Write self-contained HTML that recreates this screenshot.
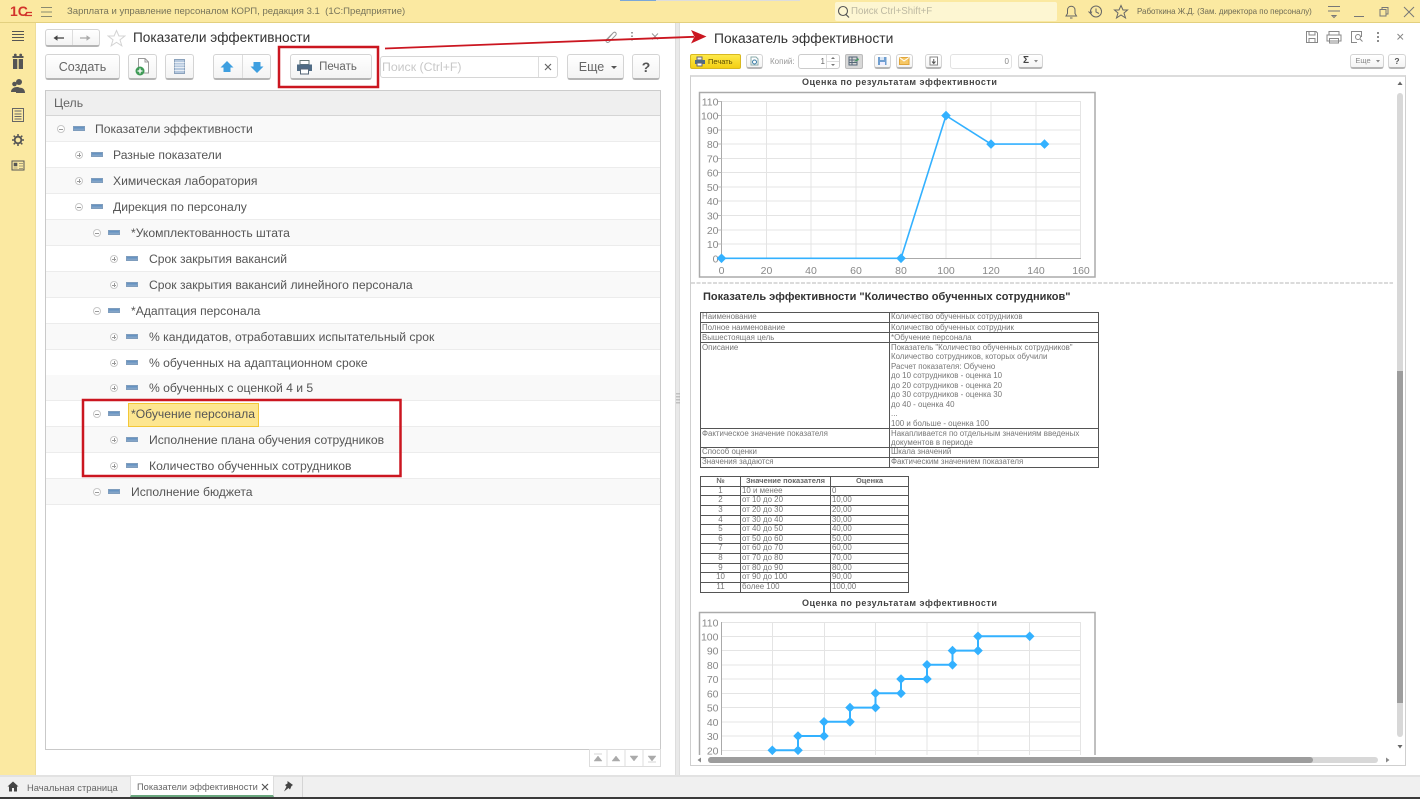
<!DOCTYPE html>
<html lang="ru"><head><meta charset="utf-8"><title>Показатели эффективности</title>
<style>
*{box-sizing:border-box}
html,body{margin:0;padding:0;width:1420px;height:799px;overflow:hidden;background:#fff;font-family:"Liberation Sans",sans-serif;color:#444}
body{filter:blur(.3px)}
.a{position:absolute;white-space:nowrap}
.top{left:0;top:0;width:1420px;height:23px;background:#fbe9a1;border-bottom:1px solid #e3d07f}
.side{left:0;top:23px;width:36px;height:752px;background:#fbe9a1;border-right:1px solid #eedd9a}
.btn{position:absolute;border:1px solid #d4d4d4;border-bottom:2px solid #b5b5b5;border-radius:3px;background:linear-gradient(#fff,#f3f3f3);text-align:center;color:#666;font-size:13px}
.row{position:absolute;left:46px;width:614px;height:26px;border-bottom:1px solid #ececec}
.row.g{background:#f9f9f9}
.t{position:absolute;font-size:12.15px;color:#555;white-space:nowrap;line-height:16px}
.minus{position:absolute;width:12px;height:5px;background:linear-gradient(#5f8fc0,#8aa9c9);border:1px solid #7f9dbd}
.exp{position:absolute;width:8px;height:8px;border:1px solid #c8c8c8;border-radius:50%;background:#fff}
.exp:before{content:"";position:absolute;left:1px;right:1px;top:2.5px;height:1px;background:#999}
.exp.p:after{content:"";position:absolute;top:1px;bottom:1px;left:2.5px;width:1px;background:#999}
table{position:absolute;border-collapse:collapse;font-size:7.9px;color:#777;table-layout:fixed;line-height:8.63px}
td,th{border:1px solid #555;padding:0 1px;vertical-align:top;white-space:nowrap;overflow:hidden;font-weight:normal}
th{font-weight:bold;text-align:center;color:#666;font-size:7.5px}
.c{text-align:center}
</style></head><body>

<div class="a top"></div>
<div class="a" style="left:620px;top:0;width:36px;height:1px;background:#7aa7d8"></div>
<div class="a" style="left:656px;top:0;width:144px;height:1px;background:#ddd"></div>
<div class="a side"></div>

<svg class="a" style="left:9px;top:4px" width="26" height="14" viewBox="0 0 26 14"><text x="1" y="12" font-family="Liberation Sans" font-weight="bold" font-size="14" fill="#d2332b">1С</text><path d="M16 11.500H23M17 8.500H23" stroke="#d2332b" stroke-width="1.300" fill="none"/></svg>
<svg class="a" style="left:41px;top:6px" width="12" height="12"><path d="M0 1.500H11M0 6H11M0 10.500H11" stroke="#8a8a70"/></svg>
<div class="a" style="left:67px;top:5px;font-size:9.55px;line-height:14px;color:#77745a;width:345px">Зарплата и управление персоналом КОРП, редакция 3.1&nbsp; (1С:Предприятие)</div>
<div class="a" style="left:835px;top:2px;width:222px;height:19px;background:#fdf6d2;border-radius:2px"></div>
<svg class="a" style="left:837px;top:5px" width="13" height="14"><circle cx="6" cy="6" r="4.500" fill="none" stroke="#555" stroke-width="1.100"/><path d="M9 9.500 12 12.500" stroke="#555" stroke-width="1.200"/></svg>
<div class="a" style="left:851px;top:5px;font-size:9.7px;line-height:14px;color:#bdb9a2">Поиск Ctrl+Shift+F</div>
<svg class="a" style="left:1063px;top:3px" width="70" height="17" fill="none" stroke="#666" stroke-width="1"><path d="M3 13H13.500L12 10.500V7C12 2 4.500 2 4.500 7V10.500ZM7 15H9.500"/><circle cx="33" cy="8.500" r="5.500"/><path d="M33 5.500V9L36 10.500M25.500 8.500 27.500 10.500 29 8.500" /><path d="M58 2.500 60 7H64.500L61 10 62.500 15 58 12 53.500 15 55 10 51.500 7H56Z"/></svg>
<div class="a" style="left:1137px;top:5px;font-size:7.95px;line-height:14px;color:#6d6a55">Работкина Ж.Д. (Зам. директора по персоналу)</div>
<svg class="a" style="left:1326px;top:4px" width="94" height="16" fill="none" stroke="#777" stroke-width="1"><path d="M2 2.500H14M2 7H14M6 11.500H10L8 13.500Z"/><path d="M28 12.500H38" /><path d="M54 5.500H60V12H54ZM56 5.500V3.500H62V10H60"/><path d="M78 3 88 13M88 3 78 13"/></svg>

<!-- sidebar icons -->
<svg class="a" style="left:9px;top:28px" width="18" height="146">
<path d="M3 3.500H15M3 6.500H15M3 9.500H15M3 12.500H15" stroke="#555" stroke-width="1.100"/>
<path d="M4 31h4.300v10H4zM9.700 31H14v10H9.700zM3.500 28h11v2h-11z" fill="#555"/><circle cx="6.300" cy="27" r="1.400" fill="#555"/><circle cx="11.700" cy="27" r="1.400" fill="#555"/>
<circle cx="10" cy="54" r="3" fill="#555"/><circle cx="5.500" cy="56" r="2.300" fill="#555"/><path d="M2 64c0-5 7-6 9-4l-1 4zM7 65c0-7 9-7 9 0z" fill="#555"/>
<path d="M3.500 80.500h11v13h-11zM5.500 83H12.500M5.500 86H12.500M5.500 88.500H12.500M5.500 91H12.500" fill="none" stroke="#666"/>
<circle cx="9" cy="112" r="3.300" fill="none" stroke="#555" stroke-width="1.800"/><path d="M9 106v2.500M9 115.500v2.500M3 112h2.500M12.500 112h2.500M4.700 107.700l1.800 1.800M11.500 114.500l1.800 1.800M13.300 107.700l-1.800 1.800M6.500 114.500l-1.800 1.800" stroke="#555" stroke-width="1.500"/>
<path d="M3 133h12v9H3z" fill="none" stroke="#555"/><path d="M5 135h3v3H5zM4.500 140h4M10 135.500h4M10 138h4M10 140.500h4" fill="#555" stroke="#555" stroke-width=".6"/>
</svg>

<!-- left pane header -->
<div class="btn" style="left:45px;top:29px;width:55px;height:18px"></div>
<div class="a" style="left:72px;top:30px;width:1px;height:15px;background:#ddd"></div>
<svg class="a" style="left:52px;top:33px" width="42" height="10"><path d="M3 5H12" stroke="#444" stroke-width="1.300"/><path d="M1.500 5 5.500 2.200V7.800Z" fill="#444"/><path d="M28 5H37" stroke="#aaa" stroke-width="1.300"/><path d="M38.500 5 34.500 2.200V7.800Z" fill="#aaa"/></svg>
<svg class="a" style="left:107px;top:29px" width="19" height="18"><path d="M9.500 1.500 11.900 7H17.800L13 10.800 14.800 16.800 9.500 13.300 4.200 16.800 6 10.800 1.200 7H7.100Z" fill="#fff" stroke="#d4d4d4"/></svg>
<div class="a" style="left:133px;top:29px;font-size:13.65px;line-height:18px;color:#333">Показатели эффективности</div>
<svg class="a" style="left:603px;top:30px" width="60" height="13" fill="none" stroke="#999"><path d="M4 10 10 3C12 1 14.500 3.500 12.500 5.500L6 12C4 13.500 2 11 3.500 9.500L9 4"/><path d="M29 2V3.500M29 5.500V7M29 9V10.500" stroke="#666" stroke-width="1.300"/><path d="M49 3.500 55 9.500M55 3.500 49 9.500"/></svg>

<!-- toolbar -->
<div class="btn" style="left:45px;top:54px;width:75px;height:26px;line-height:24px;font-size:12.5px">Создать</div>
<div class="btn" style="left:128px;top:54px;width:29px;height:26px"></div>
<svg class="a" style="left:134px;top:57px" width="18" height="20"><path d="M4.500 1.500H11L14.500 5V16H4.500Z" fill="#fff" stroke="#999"/><path d="M11 1.500V5H14.500" fill="none" stroke="#999"/><circle cx="6" cy="14" r="4.500" fill="#3f9b57"/><path d="M3.500 14H8.500M6 11.500V16.500" stroke="#fff" stroke-width="1.300"/></svg>
<div class="btn" style="left:165px;top:54px;width:29px;height:26px"></div>
<svg class="a" style="left:173px;top:58px" width="14" height="18"><path d="M1.500 1.500h10v14h-10z" fill="#b5c8de" stroke="#8ba2bc"/><path d="M1.500 4.500h10M1.500 7h10M1.500 9.500h10M1.500 12.500h10" stroke="#e8eef5"/></svg>
<div class="btn" style="left:213px;top:54px;width:58px;height:26px"></div>
<div class="a" style="left:242px;top:55px;width:1px;height:23px;background:#ddd"></div>
<svg class="a" style="left:219px;top:60px" width="46" height="14" fill="#3e9fe0"><path d="M8 1 14.500 7.500H11.500V12H4.500V7.500H1.500Z"/><path d="M38 13 31.500 6.500H34.500V2H41.500V6.500H44.500Z"/></svg>
<div class="btn" style="left:290px;top:54px;width:82px;height:26px;line-height:24px;font-size:11.5px;padding-left:14px">Печать</div>
<svg class="a" style="left:296px;top:59px" width="17" height="16"><path d="M4 1.500h9v4H4z" fill="#fff" stroke="#677"/><path d="M1 5.500h15v6.500h-3v-2H4v2H1z" fill="#4f6b85"/><path d="M4.500 10h8v5h-8z" fill="#fff" stroke="#567"/></svg>
<div class="a" style="left:380px;top:56px;width:178px;height:22px;background:#fff;border:1px solid #d6d6d6;border-radius:3px;font-size:12.3px;line-height:20px;color:#c8c8c8;padding-left:1px">Поиск (Ctrl+F)</div>
<div class="a" style="left:538px;top:57px;width:1px;height:20px;background:#ddd"></div>
<svg class="a" style="left:543px;top:62px" width="10" height="10"><path d="M2 2 8 8M8 2 2 8" stroke="#666" stroke-width="1.200"/></svg>
<div class="btn" style="left:567px;top:54px;width:57px;height:26px;line-height:24px;font-size:12.5px;padding-right:8px">Еще</div>
<svg class="a" style="left:611px;top:66px" width="7" height="4"><path d="M0 0H6L3 3Z" fill="#555"/></svg>
<div class="btn" style="left:632px;top:54px;width:28px;height:26px;line-height:24px;font-size:14px;font-weight:bold;color:#555">?</div>

<!-- tree -->
<div class="a" style="left:45px;top:90px;width:616px;height:660px;border:1px solid #c9c9c9;border-top:1px solid #ccc"></div>
<div class="a" style="left:46px;top:90px;width:614px;height:26px;background:#efefef;border-bottom:1px solid #d5d5d5;border-top:1px solid #ccc"></div>
<div class="t" style="left:54px;top:95px;color:#666;font-size:12.3px">Цель</div>

<div class="row g" style="top:116px"></div>
<div class="row" style="top:142px"></div>
<div class="row g" style="top:168px"></div>
<div class="row" style="top:194px"></div>
<div class="row g" style="top:220px"></div>
<div class="row" style="top:246px"></div>
<div class="row g" style="top:272px"></div>
<div class="row" style="top:298px"></div>
<div class="row g" style="top:324px"></div>
<div class="row" style="top:350px"></div>
<div class="row g" style="top:375px"></div>
<div class="row" style="top:401px"></div>
<div class="row g" style="top:427px"></div>
<div class="row" style="top:453px"></div>
<div class="row g" style="top:479px"></div>

<div class="exp" style="left:57px;top:125px"></div><div class="minus" style="left:73px;top:126px"></div><div class="t" style="left:95px;top:121px">Показатели эффективности</div>
<div class="exp p" style="left:75px;top:151px"></div><div class="minus" style="left:91px;top:152px"></div><div class="t" style="left:113px;top:147px">Разные показатели</div>
<div class="exp p" style="left:75px;top:177px"></div><div class="minus" style="left:91px;top:178px"></div><div class="t" style="left:113px;top:173px">Химическая лаборатория</div>
<div class="exp" style="left:75px;top:203px"></div><div class="minus" style="left:91px;top:204px"></div><div class="t" style="left:113px;top:199px">Дирекция по персоналу</div>
<div class="exp" style="left:93px;top:229px"></div><div class="minus" style="left:108px;top:230px"></div><div class="t" style="left:131px;top:225px">*Укомплектованность штата</div>
<div class="exp p" style="left:110px;top:255px"></div><div class="minus" style="left:126px;top:256px"></div><div class="t" style="left:149px;top:251px">Срок закрытия вакансий</div>
<div class="exp p" style="left:110px;top:281px"></div><div class="minus" style="left:126px;top:282px"></div><div class="t" style="left:149px;top:277px">Срок закрытия вакансий линейного персонала</div>
<div class="exp" style="left:93px;top:307px"></div><div class="minus" style="left:108px;top:308px"></div><div class="t" style="left:131px;top:303px">*Адаптация персонала</div>
<div class="exp p" style="left:110px;top:333px"></div><div class="minus" style="left:126px;top:334px"></div><div class="t" style="left:149px;top:329px">% кандидатов, отработавших испытательный срок</div>
<div class="exp p" style="left:110px;top:359px"></div><div class="minus" style="left:126px;top:360px"></div><div class="t" style="left:149px;top:355px">% обученных на адаптационном сроке</div>
<div class="exp p" style="left:110px;top:384px"></div><div class="minus" style="left:126px;top:385px"></div><div class="t" style="left:149px;top:380px">% обученных с оценкой 4 и 5</div>
<div class="a" style="left:128px;top:403px;width:131px;height:24px;background:#fde690;border:1px solid #f3c737"></div>
<div class="exp" style="left:93px;top:410px"></div><div class="minus" style="left:108px;top:411px"></div><div class="t" style="left:131px;top:406px">*Обучение персонала</div>
<div class="exp p" style="left:110px;top:436px"></div><div class="minus" style="left:126px;top:437px"></div><div class="t" style="left:149px;top:432px">Исполнение плана обучения сотрудников</div>
<div class="exp p" style="left:110px;top:462px"></div><div class="minus" style="left:126px;top:463px"></div><div class="t" style="left:149px;top:458px">Количество обученных сотрудников</div>
<div class="exp" style="left:93px;top:488px"></div><div class="minus" style="left:108px;top:489px"></div><div class="t" style="left:131px;top:484px">Исполнение бюджета</div>

<!-- tree paging -->
<svg class="a" style="left:589px;top:749px" width="72" height="18"><rect x=".5" y=".5" width="71" height="17" fill="#fff" stroke="#ddd"/><path d="M18 0V18M36 0V18M54 0V18" stroke="#ddd"/><path d="M5 5H13M5 12H13L9 7ZM23 12H31L27 7ZM41 7H49L45 12ZM59 7H67L63 12ZM59 13H67" fill="#aaa" stroke="#aaa" stroke-width=".5"/></svg>

<!-- splitter -->
<div class="a" style="left:675px;top:23px;width:5px;height:752px;background:#e9e9e9;border-left:1px solid #ddd;border-right:1px solid #ddd"></div>
<svg class="a" style="left:676px;top:392px" width="4" height="14"><path d="M1 1V13" stroke="#999" stroke-dasharray="1.500 1.500"/><path d="M3 1V13" stroke="#999" stroke-dasharray="1.500 1.500"/></svg>

<!-- right pane header -->
<div class="a" style="left:714px;top:29px;font-size:13.85px;line-height:18px;color:#333">Показатель эффективности</div>
<svg class="a" style="left:1304px;top:29px" width="104" height="16" fill="none" stroke="#888"><path d="M2.500 2.500H12L13.500 4V13.500H2.500ZM5 2.500V6H11V2.500M5 13.500V9.500H11V13.500"/><path d="M25 6V2.500H35V6M23 6H37V12H23ZM25.500 9.500H34.500V14H25.500Z"/><path d="M53 13.500H47.500V2.500H57.500V8"/><circle cx="54" cy="8" r="2.500"/><path d="M56 10 58.500 12.500"/><path d="M74 3V5M74 7V9M74 11V13" stroke="#666" stroke-width="1.500"/><path d="M93.500 5 99 10.500M99 5 93.500 10.500"/></svg>

<!-- right toolbar -->
<div class="a" style="left:690px;top:54px;width:51px;height:15px;background:linear-gradient(#fde94a,#f4cf13);border:1px solid #d8b820;border-radius:2px;font-size:7.5px;line-height:13px;color:#5c4b00;padding-left:17px">Печать</div>
<svg class="a" style="left:694px;top:56px" width="12" height="11"><path d="M3 1h5v3H3z" fill="#eee" stroke="#667"/><path d="M1 4h10v4H1z" fill="#4f6b85"/><path d="M3 7h5v3H3z" fill="#fff" stroke="#667"/></svg>
<div class="btn" style="left:746px;top:54px;width:17px;height:15px"></div>
<svg class="a" style="left:749px;top:56px" width="11" height="11"><path d="M2 1h5l2 2v6H2z" fill="#fff" stroke="#8aa"/><circle cx="5.500" cy="6" r="2" fill="none" stroke="#3a7ca5"/></svg>
<div class="a" style="left:770px;top:55px;font-size:8px;line-height:13px;color:#999">Копий:</div>
<div class="a" style="left:798px;top:54px;width:42px;height:15px;background:#fff;border:1px solid #ccc;border-radius:3px;font-size:8px;line-height:13px;color:#666;text-align:right;padding-right:14px">1</div>
<svg class="a" style="left:826px;top:54px" width="14" height="15"><path d="M.5 1V14M1 7.500H13" stroke="#ddd"/><path d="M5 5H9L7 3ZM5 10H9L7 12Z" fill="#777"/></svg>
<div class="a" style="left:845px;top:54px;width:18px;height:15px;background:#d8d8d8;border:1px solid #bbb;border-radius:2px"></div>
<svg class="a" style="left:848px;top:56px" width="12" height="11"><path d="M1 1h8v8H1zM1 4h8M1 6.500h8M4 1v8" fill="none" stroke="#567"/><path d="M6 6l4-4 1 2z" fill="#3d9a58"/></svg>
<div class="btn" style="left:874px;top:54px;width:17px;height:15px"></div>
<svg class="a" style="left:877px;top:56px" width="11" height="10"><path d="M1 1h8.500v8H1z" fill="#6f9ed0"/><path d="M3 1h4v3H3z" fill="#d8e6f5"/><path d="M3 6h5v3H3z" fill="#eef"/></svg>
<div class="btn" style="left:896px;top:54px;width:17px;height:15px"></div>
<svg class="a" style="left:899px;top:57px" width="11" height="8"><path d="M.5.500h9.500v7H.5z" fill="#f6c765" stroke="#e0a53a"/><path d="M.5.500 5 4l5-3.500" fill="none" stroke="#fff"/></svg>
<div class="btn" style="left:925px;top:54px;width:17px;height:15px"></div>
<svg class="a" style="left:929px;top:56px" width="10" height="10"><path d="M1 1h7.500v8H1z" fill="#fff" stroke="#888"/><path d="M4.750 3V7M3 5.500 4.750 7.500 6.500 5.500" fill="none" stroke="#555"/></svg>
<div class="a" style="left:950px;top:54px;width:62px;height:15px;background:#fff;border:1px solid #e2e2e2;border-radius:3px;font-size:8px;line-height:13px;color:#888;text-align:right;padding-right:2px">0</div>
<div class="btn" style="left:1018px;top:54px;width:25px;height:15px;font-size:10px;line-height:11px;font-weight:bold;padding-right:9px;color:#444">Σ</div>
<svg class="a" style="left:1034px;top:60px" width="5" height="3"><path d="M0 0H4L2 2.500Z" fill="#888"/></svg>
<div class="btn" style="left:1350px;top:54px;width:34px;height:15px;font-size:7.5px;line-height:12px;padding-right:8px;color:#888">Еще</div>
<svg class="a" style="left:1376px;top:60px" width="5" height="3"><path d="M0 0H4L2 2.500Z" fill="#888"/></svg>
<div class="btn" style="left:1388px;top:54px;width:18px;height:15px;font-size:8.5px;line-height:12px;font-weight:bold;color:#555">?</div>

<!-- report frame -->
<div class="a" style="left:690px;top:75px;width:716px;height:691px;border:1px solid #cfcfcf;border-top:2px solid #dcdcdc"></div>
<div class="a" style="left:802px;top:76px;font-size:9px;line-height:12px;font-weight:bold;color:#444;letter-spacing:.5px">Оценка по результатам эффективности</div>

<svg class="a" style="left:0;top:0" width="1420" height="799" font-family="Liberation Sans" pointer-events="none">
<defs><path id="d" d="M0-4.800 4.800 0 0 4.800-4.800 0z" fill="#33b1ff"/><clipPath id="cp"><rect x="692" y="600" width="700" height="155"/></clipPath></defs>
<!-- chart 1 -->
<rect x="699.500" y="92.500" width="395.500" height="184.500" fill="#fff" stroke="#aaa" stroke-width="1.500"/>
<path d="M721 101.500H1081M721 115.500H1081M721 130H1081M721 144H1081M721 158.500H1081M721 172.500H1081M721 187H1081M721 201H1081M721 215.500H1081M721 230H1081M721 244H1081M766.500 101V258M811 101V258M856 101V258M901 101V258M946 101V258M991 101V258M1036 101V258M1080.500 101V258" stroke="#e4e4e4" fill="none"/>
<path d="M721.500 101V258.500H1081" stroke="#aaa" fill="none"/>
<path d="M718 101.500H721.500M718 115.500H721.500M718 130H721.500M718 144H721.500M718 158.500H721.500M718 172.500H721.500M718 187H721.500M718 201H721.500M718 215.500H721.500M718 230H721.500M718 244H721.500M718 258.500H721.500" stroke="#bbb"/>
<g font-size="10.500" fill="#888" text-anchor="end">
<text x="718.500" y="105.500">110</text><text x="718.500" y="119.500">100</text><text x="718.500" y="134">90</text><text x="718.500" y="148">80</text><text x="718.500" y="162.500">70</text><text x="718.500" y="176.500">60</text><text x="718.500" y="191">50</text><text x="718.500" y="205">40</text><text x="718.500" y="219.500">30</text><text x="718.500" y="234">20</text><text x="718.500" y="248">10</text><text x="718.500" y="262.500">0</text>
</g>
<g font-size="10.500" fill="#888" text-anchor="middle">
<text x="721.500" y="274">0</text><text x="766.500" y="274">20</text><text x="811" y="274">40</text><text x="856" y="274">60</text><text x="901" y="274">80</text><text x="946" y="274">100</text><text x="991" y="274">120</text><text x="1036" y="274">140</text><text x="1081" y="274">160</text>
</g>
<path d="M721.500 258.300H901L946 115.600 991 144.100H1044.500" fill="none" stroke="#33b1ff" stroke-width="1.600"/>
<use href="#d" x="721.500" y="258.300"/><use href="#d" x="901" y="258.300"/><use href="#d" x="946" y="115.600"/><use href="#d" x="991" y="144.100"/><use href="#d" x="1044.500" y="144.100"/>
<!-- dashed -->
<path d="M691 283H1393" stroke="#cfcfcf" stroke-width="1.500" stroke-dasharray="4 1.500"/>
<!-- chart 2 -->
<g clip-path="url(#cp)">
<rect x="699.500" y="612.500" width="395.500" height="190" fill="#fff" stroke="#aaa" stroke-width="1.500"/>
<path d="M721 622.500H1081M721 636.500H1081M721 650.500H1081M721 665H1081M721 679H1081M721 693.500H1081M721 707.500H1081M721 722H1081M721 736H1081M721 750.500H1081M772.500 622V760M824.500 622V760M875.500 622V760M927 622V760M978 622V760M1029.500 622V760M1080.500 622V760" stroke="#e4e4e4" fill="none"/>
<path d="M721.500 622V760" stroke="#aaa"/>
<g font-size="10.500" fill="#888" text-anchor="end">
<text x="718.500" y="626.500">110</text><text x="718.500" y="640.500">100</text><text x="718.500" y="654.500">90</text><text x="718.500" y="669">80</text><text x="718.500" y="683">70</text><text x="718.500" y="697.500">60</text><text x="718.500" y="711.500">50</text><text x="718.500" y="726">40</text><text x="718.500" y="740">30</text><text x="718.500" y="754.500">20</text>
</g>
<path d="M772.300 750.300H798V736H824V721.800H850V707.600H875.500V693.300H901V679H927V664.800H952.500V650.600H978V636.300H1029.700" fill="none" stroke="#33b1ff" stroke-width="2"/>
<use href="#d" x="772.300" y="750.300"/><use href="#d" x="798" y="750.300"/><use href="#d" x="798" y="736"/><use href="#d" x="824" y="736"/><use href="#d" x="824" y="721.800"/><use href="#d" x="850" y="721.800"/><use href="#d" x="850" y="707.600"/><use href="#d" x="875.500" y="707.600"/><use href="#d" x="875.500" y="693.300"/><use href="#d" x="901" y="693.300"/><use href="#d" x="901" y="679"/><use href="#d" x="927" y="679"/><use href="#d" x="927" y="664.800"/><use href="#d" x="952.500" y="664.800"/><use href="#d" x="952.500" y="650.600"/><use href="#d" x="978" y="650.600"/><use href="#d" x="978" y="636.300"/><use href="#d" x="1029.700" y="636.300"/>
</g>
<!-- scrollbars -->
<rect x="1397" y="93" width="6" height="644" rx="3" fill="#d8d8d8"/>
<rect x="1397" y="371" width="6" height="332" fill="#9d9d9d"/>
<path d="M1397.500 85H1402.500L1400 81.500ZM1397.500 745H1402.500L1400 748.500Z" fill="#666"/>
<rect x="708" y="757" width="670" height="6" rx="3" fill="#d8d8d8"/>
<rect x="708" y="757" width="605" height="6" rx="3" fill="#9d9d9d"/>
<path d="M701 757.500V762.500L697.500 760ZM1386 757.500V762.500L1389.500 760Z" fill="#888"/>
<!-- red annotation -->
<rect x="279" y="47" width="99" height="40" fill="none" stroke="#cb1620" stroke-width="2.500"/>
<rect x="83" y="400" width="317.500" height="76" fill="none" stroke="#cb1620" stroke-width="2.500"/>
<path d="M385 48.500 694 36.800" stroke="#cb1620" stroke-width="1.800"/>
<path d="M706.500 36.500 691 30 694.500 36.800 691 43.500Z" fill="#cb1620"/>
</svg>

<div class="a" style="left:703px;top:290px;font-size:11px;line-height:14px;font-weight:bold;color:#333">Показатель эффективности "Количество обученных сотрудников"</div>

<table style="left:700px;top:312px;width:398px">
<colgroup><col style="width:189px"><col style="width:209px"></colgroup>
<tr style="line-height:8.5px"><td>Наименование</td><td>Количество обученных сотрудников</td></tr>
<tr style="line-height:9px"><td>Полное наименование</td><td>Количество обученных сотрудник</td></tr>
<tr style="line-height:9px"><td>Вышестоящая цель</td><td>*Обучение персонала</td></tr>
<tr style="line-height:9.5px"><td>Описание</td><td>Показатель "Количество обученных сотрудников"<br>Количество сотрудников, которых обучили<br>Расчет показателя: Обучено<br>до 10 сотрудников - оценка 10<br>до 20 сотрудников - оценка 20<br>до 30 сотрудников - оценка 30<br>до 40 - оценка 40<br>...<br>100 и больше - оценка 100</td></tr>
<tr style="line-height:9.2px"><td>Фактическое значение показателя</td><td>Накапливается по отдельным значениям введеных<br>документов в периоде</td></tr>
<tr style="line-height:8.6px"><td>Способ оценки</td><td>Шкала значений</td></tr>
<tr style="line-height:8.7px"><td>Значения задаются</td><td>Фактическим значением показателя</td></tr>
</table>

<table style="left:700px;top:476px;width:208px">
<colgroup><col style="width:40px"><col style="width:90px"><col style="width:78px"></colgroup>
<tr><th>№</th><th>Значение показателя</th><th>Оценка</th></tr>
<tr><td class="c">1</td><td>10 и менее</td><td>0</td></tr>
<tr><td class="c">2</td><td>от 10 до 20</td><td>10,00</td></tr>
<tr><td class="c">3</td><td>от 20 до 30</td><td>20,00</td></tr>
<tr><td class="c">4</td><td>от 30 до 40</td><td>30,00</td></tr>
<tr><td class="c">5</td><td>от 40 до 50</td><td>40,00</td></tr>
<tr><td class="c">6</td><td>от 50 до 60</td><td>50,00</td></tr>
<tr><td class="c">7</td><td>от 60 до 70</td><td>60,00</td></tr>
<tr><td class="c">8</td><td>от 70 до 80</td><td>70,00</td></tr>
<tr><td class="c">9</td><td>от 80 до 90</td><td>80,00</td></tr>
<tr><td class="c">10</td><td>от 90 до 100</td><td>90,00</td></tr>
<tr><td class="c">11</td><td>более 100</td><td>100,00</td></tr>
</table>
<div class="a" style="left:802px;top:597px;font-size:9px;line-height:12px;font-weight:bold;color:#444;letter-spacing:.5px">Оценка по результатам эффективности</div>

<!-- tabs -->
<div class="a" style="left:0;top:775px;width:1420px;height:22px;background:#f0f0f0;border-top:2px solid #e2e2e2"></div>
<div class="a" style="left:0;top:797px;width:1420px;height:2px;background:#3a3a3a"></div>
<svg class="a" style="left:7px;top:781px" width="12" height="11"><path d="M6 .5 11.500 5.500H10V10.500H7V7H5V10.500H2V5.500H.5Z" fill="#444"/></svg>
<div class="a" style="left:27px;top:781px;font-size:9.4px;line-height:13px;color:#666">Начальная страница</div>
<div class="a" style="left:130px;top:776px;width:144px;height:21px;background:#fff;border-left:1px solid #ddd;border-right:1px solid #ddd;border-bottom:2px solid #6aa87f"></div>
<div class="a" style="left:137px;top:781px;font-size:9.3px;line-height:13px;color:#666">Показатели эффективности</div>
<svg class="a" style="left:261px;top:783px" width="8" height="8"><path d="M1 1 7 7M7 1 1 7" stroke="#555" stroke-width="1.200"/></svg>
<div class="a" style="left:302px;top:776px;width:1px;height:21px;background:#d5d5d5"></div>
<svg class="a" style="left:282px;top:780px" width="12" height="13"><path d="M5.500 1 11 5 9.500 6 8 9.500 6.500 8 2 11.500 4.500 6.500 3 5 5.500 3.500Z" fill="#444"/></svg>
</body></html>
